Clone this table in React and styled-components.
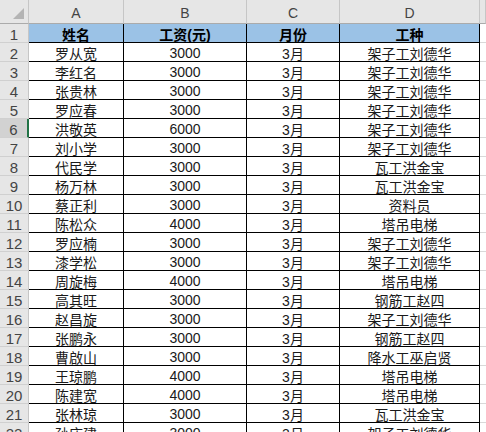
import React from 'react';
import styled, { createGlobalStyle, css } from 'styled-components';

const rows = [
  ['姓名', '工资(元)', '月份', '工种'],
  ['罗从宽', '3000', '3月', '架子工刘德华'],
  ['李红名', '3000', '3月', '架子工刘德华'],
  ['张贵林', '3000', '3月', '架子工刘德华'],
  ['罗应春', '3000', '3月', '架子工刘德华'],
  ['洪敬英', '6000', '3月', '架子工刘德华'],
  ['刘小学', '3000', '3月', '架子工刘德华'],
  ['代民学', '3000', '3月', '瓦工洪金宝'],
  ['杨万林', '3000', '3月', '瓦工洪金宝'],
  ['蔡正利', '3000', '3月', '资料员'],
  ['陈松众', '4000', '3月', '塔吊电梯'],
  ['罗应楠', '3000', '3月', '架子工刘德华'],
  ['漆学松', '3000', '3月', '架子工刘德华'],
  ['周旋梅', '4000', '3月', '塔吊电梯'],
  ['高其旺', '3000', '3月', '钢筋工赵四'],
  ['赵昌旋', '3000', '3月', '架子工刘德华'],
  ['张鹏永', '3000', '3月', '钢筋工赵四'],
  ['曹啟山', '3000', '3月', '降水工巫启贤'],
  ['王琼鹏', '4000', '3月', '塔吊电梯'],
  ['陈建宽', '4000', '3月', '塔吊电梯'],
  ['张林琼', '3000', '3月', '瓦工洪金宝'],
  ['孙庆建', '3000', '3月', '架子工刘德华'],
];

// column E is too narrow to show its letter
const letters = ['A', 'B', 'C', 'D', ''];
const selectedRow = 6;

const App = () => (
  <>
    <GlobalStyle />
    <Sheet>
      <Corner>
        <Triangle />
      </Corner>
      {letters.map((l, i) => (
        <ColHeader key={i}>{l}</ColHeader>
      ))}
      {rows.map((row, i) => (
        <React.Fragment key={i}>
          <RowHeader selected={i + 1 === selectedRow}>{i + 1}</RowHeader>
          {row.map((val, j) => (
            <Cell key={j} head={i === 0}>{val}</Cell>
          ))}
          <EmptyCell />
        </React.Fragment>
      ))}
    </Sheet>
  </>
);

const GlobalStyle = createGlobalStyle`
  html, body {
    margin: 0;
    padding: 0;
    background: #ffffff;
    overflow: hidden;
  }
`;

const Sheet = styled.div`
  display: grid;
  grid-template-columns: 29px 95px 123px 93px 140px 1fr;
  grid-template-rows: 24px;
  grid-auto-rows: 19px;
  width: 486px;
  height: 432px;
  overflow: hidden;
  font-family: 'Liberation Sans', 'Noto Sans CJK SC', sans-serif;
`;

const Corner = styled.div`
  box-sizing: border-box;
  background: #e6e6e6;
  border-right: 1px solid #c6c6c6;
  border-bottom: 1px solid #ababab;
  display: flex;
  justify-content: flex-end;
  align-items: flex-end;
  padding: 0 4px 4px 0;
`;

const Triangle = styled.div`
  width: 0;
  height: 0;
  border-left: 11px solid transparent;
  border-bottom: 11px solid #b4b4b4;
`;

const ColHeader = styled.div`
  box-sizing: border-box;
  background: #e6e6e6;
  border-right: 1px solid #c6c6c6;
  border-bottom: 1px solid #ababab;
  display: flex;
  align-items: center;
  justify-content: center;
  padding-top: 3px;
  font-size: 14px;
  color: #444444;
`;

const RowHeader = styled.div`
  box-sizing: border-box;
  background: #e6e6e6;
  border-right: 1px solid #c6c6c6;
  border-bottom: 1px solid #d0d0d0;
  display: flex;
  align-items: center;
  justify-content: center;
  padding-top: 2px;
  font-size: 15px;
  color: #444444;
  ${({ selected }) =>
    selected &&
    css`
      background: #d2d2d2;
      border-right: 2px solid #217346;
    `}
`;

const Cell = styled.div`
  box-sizing: border-box;
  border-right: 1px solid #000000;
  border-bottom: 1px solid #000000;
  display: flex;
  align-items: center;
  justify-content: center;
  padding-top: 1px;
  font-size: 14px;
  color: #1a1a1a;
  white-space: nowrap;
  overflow: hidden;
  ${({ head }) =>
    head &&
    css`
      background: #9bc2e6;
      font-weight: bold;
      color: #000000;
    `}
`;

const EmptyCell = styled.div`
  box-sizing: border-box;
  border-bottom: 1px solid #d9d9d9;
`;

export default App;
